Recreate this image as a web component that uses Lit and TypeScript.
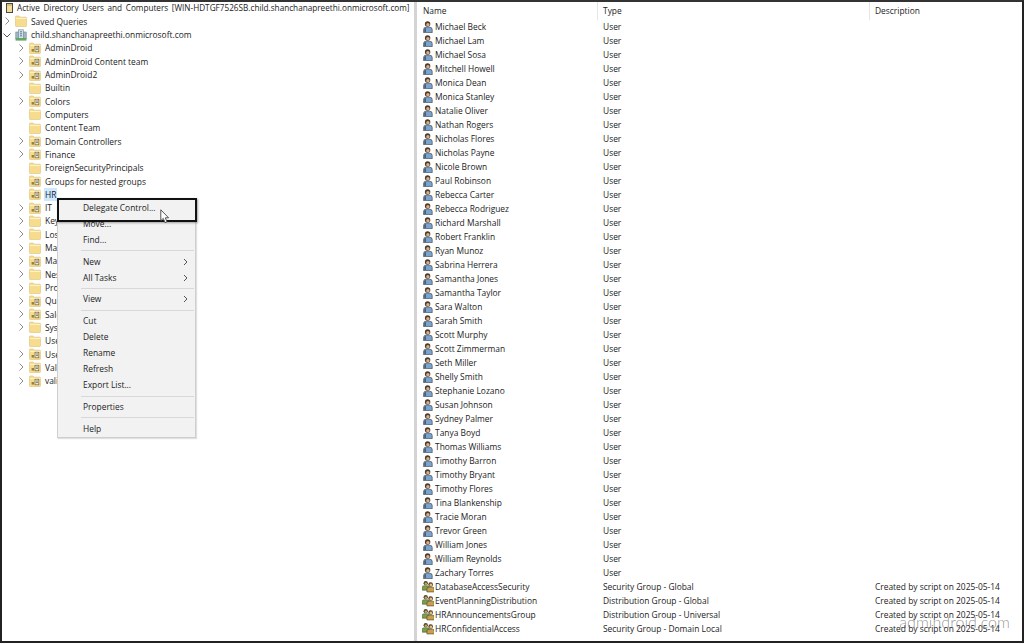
import {LitElement, html, css, svg} from 'lit';
import {customElement} from 'lit/decorators.js';

type TreeRow = {label: string; ou?: boolean; arrow?: boolean};
type ListRow = {name: string; type: string; description?: string; group?: boolean};

const TREE: TreeRow[] = [
  {label: 'AdminDroid', ou: true, arrow: true},
  {label: 'AdminDroid Content team', ou: true, arrow: true},
  {label: 'AdminDroid2', ou: true, arrow: true},
  {label: 'Builtin'},
  {label: 'Colors', ou: true, arrow: true},
  {label: 'Computers'},
  {label: 'Content Team'},
  {label: 'Domain Controllers', ou: true, arrow: true},
  {label: 'Finance', ou: true, arrow: true},
  {label: 'ForeignSecurityPrincipals'},
  {label: 'Groups for nested groups', ou: true},
  {label: 'HR', ou: true},
  {label: 'IT', ou: true, arrow: true},
  {label: 'Keys', arrow: true},
  {label: 'LostAndFound', arrow: true},
  {label: 'Managed Service Accounts', arrow: true},
  {label: 'Marketing', ou: true, arrow: true},
  {label: 'NestedGroups', arrow: true},
  {label: 'Program Data', arrow: true},
  {label: 'Quality', ou: true, arrow: true},
  {label: 'Sales', ou: true, arrow: true},
  {label: 'System', arrow: true},
  {label: 'Users'},
  {label: 'UserAccounts', ou: true, arrow: true},
  {label: 'Validation', ou: true, arrow: true},
  {label: 'validation2', ou: true, arrow: true},
];

const USERS = [
  'Michael Beck', 'Michael Lam', 'Michael Sosa', 'Mitchell Howell', 'Monica Dean', 'Monica Stanley',
  'Natalie Oliver', 'Nathan Rogers', 'Nicholas Flores', 'Nicholas Payne', 'Nicole Brown', 'Paul Robinson',
  'Rebecca Carter', 'Rebecca Rodriguez', 'Richard Marshall', 'Robert Franklin', 'Ryan Munoz', 'Sabrina Herrera',
  'Samantha Jones', 'Samantha Taylor', 'Sara Walton', 'Sarah Smith', 'Scott Murphy', 'Scott Zimmerman',
  'Seth Miller', 'Shelly Smith', 'Stephanie Lozano', 'Susan Johnson', 'Sydney Palmer', 'Tanya Boyd',
  'Thomas Williams', 'Timothy Barron', 'Timothy Bryant', 'Timothy Flores', 'Tina Blankenship', 'Tracie Moran',
  'Trevor Green', 'William Jones', 'William Reynolds', 'Zachary Torres',
];

const NOTE = 'Created by script on 2025-05-14';
const ROWS: ListRow[] = [
  ...USERS.map((name) => ({name, type: 'User'})),
  {name: 'DatabaseAccessSecurity', type: 'Security Group - Global', description: NOTE, group: true},
  {name: 'EventPlanningDistribution', type: 'Distribution Group - Global', description: NOTE, group: true},
  {name: 'HRAnnouncementsGroup', type: 'Distribution Group - Universal', description: NOTE, group: true},
  {name: 'HRConfidentialAccess', type: 'Security Group - Domain Local', description: NOTE, group: true},
];

// menu rows: null is a separator
const MENU: ({label: string; sub?: boolean} | null)[] = [
  {label: 'Delegate Control...'}, {label: 'Move...'}, {label: 'Find...'}, null,
  {label: 'New', sub: true}, {label: 'All Tasks', sub: true}, null,
  {label: 'View', sub: true}, null,
  {label: 'Cut'}, {label: 'Delete'}, {label: 'Rename'}, {label: 'Refresh'}, {label: 'Export List...'}, null,
  {label: 'Properties'}, null,
  {label: 'Help'},
];

const chevronRight = html`<svg class="chev" viewBox="0 0 8 10"><path d="M2.5 1.5 6 5 2.5 8.5" fill="none" stroke="#8c8c8c" stroke-width="1"/></svg>`;
const chevronDown = html`<svg class="chev" viewBox="0 0 8 10"><path d="M.5 3.5 4 7 7.5 3.5" fill="none" stroke="#555" stroke-width="1"/></svg>`;
const menuChevron = html`<svg class="sub" viewBox="0 0 5 8"><path d="M1 1 4 4 1 7" fill="none" stroke="#555" stroke-width="1"/></svg>`;

function folder(ou = false) {
  return html`<svg class="ico" viewBox="0 0 12 12">
    <path d="M.5 2.5V1.6q0-.6.6-.6h3l1 1.2h5.8q.6 0 .6.6v8q0 .7-.6.7H1.1q-.6 0-.6-.7z" fill="#f8dc8e" stroke="#e0c888" stroke-width=".7"/>
    <path d="M1 3.5h10.5" stroke="#fdf3c8" stroke-width="1"/>
    ${ou ? svg`<rect x="6" y="4.2" width="3.8" height="5.6" fill="#fbf6e4" stroke="#6f6238" stroke-width=".7"/><path d="M6.8 6h2.2M6.8 7.6h2.2" stroke="#5f5f5f" stroke-width=".8"/><rect x="2.6" y="7" width="2.4" height="2.6" fill="#9c8236"/>` : ''}
  </svg>`;
}

const titleIcon = html`<svg class="ico narrow" viewBox="0 0 7 10">
  <rect x=".5" y=".5" width="6" height="9" fill="#f3dc9a" stroke="#4a4a3c" stroke-width="1"/>
  <path d="M1 2h5" stroke="#b9a561" stroke-width="1"/>
</svg>`;

const userIcon = html`<svg class="ico" viewBox="0 0 12 12">
  <circle cx="5.6" cy="3" r="2.7" fill="#4c3a2c"/>
  <ellipse cx="5.9" cy="3.7" rx="1.7" ry="1.6" fill="#d9ad86"/>
  <path d="M1.6 11.7V8.6Q1.6 6.2 4 6.2h3.6q2.6 0 2.6 2.4v3.1z" fill="#7ba3cc" stroke="#3f4d5c" stroke-width=".7"/>
  <path d="M2.4 11V8.6Q2.4 7 3.8 7v4z" fill="#3f4d5c"/>
</svg>`;

const groupIcon = html`<svg class="ico" viewBox="0 0 13 13">
  <g transform="translate(-.6 -.2) scale(.86)"><circle cx="5.4" cy="3" r="2.7" fill="#4f4526"/><ellipse cx="5.6" cy="3.6" rx="1.6" ry="1.5" fill="#c8a765"/><path d="M1 11.8V8.4Q1 6.2 3.4 6.2h4q2.4 0 2.4 2.2v3.4z" fill="#7d9f4c" stroke="#3f5226" stroke-width=".7"/></g>
  <g transform="translate(4.4 1) scale(.92)"><circle cx="5.4" cy="3" r="2.7" fill="#4a3620"/><ellipse cx="5.6" cy="3.6" rx="1.7" ry="1.6" fill="#e3bb7c"/><path d="M1 11.8V8.4Q1 6.2 3.4 6.2h4q2.4 0 2.4 2.2v3.4z" fill="#c79f4e" stroke="#4e3f1e" stroke-width=".7"/></g>
</svg>`;

const domainIcon = html`<svg class="ico" viewBox="0 0 12 12">
  <rect x=".8" y="3" width="3.6" height="7" fill="#9fb6c4" stroke="#6c8797" stroke-width=".6"/>
  <rect x="7.6" y="3" width="3.6" height="7" fill="#9fb6c4" stroke="#6c8797" stroke-width=".6"/>
  <rect x="3.6" y=".8" width="4.8" height="9.2" fill="#d5e0e6" stroke="#6c8797" stroke-width=".6"/>
  <rect x=".6" y="9" width="10.8" height="2.6" fill="#63a868"/>
  <path d="M5 2.8h2M5 4.8h2M5 6.8h2" stroke="#43737f" stroke-width=".9"/>
</svg>`;

@customElement('app-root')
export class AppRoot extends LitElement {
  static styles = css`
    :host {
      display: block;
      width: 1024px;
      height: 643px;
      font-family: "Open Sans", "Noto Sans", sans-serif;
      font-size: 8.42px;
      color: #222;
      background: #fff;
    }
    .frame {
      position: relative;
      box-sizing: border-box;
      width: 1024px;
      height: 643px;
      border: 2px solid #222;
      border-top-color: #333;
      display: flex;
      overflow: hidden;
    }
    .ico { width: 12px; height: 12px; flex: none; }
    .ico.narrow { width: 7px; height: 10px; }
    .chev { width: 8px; height: 10px; flex: none; }

    /* left pane */
    .tree {
      width: 412px;
      flex: none;
      white-space: nowrap;
      overflow: hidden;
    }
    .row {
      height: 13.32px;
      display: flex;
      align-items: center;
    }
    .row .label { line-height: 13px; padding: 0 1px; }
    .title { padding-left: 4px; height: 11px; margin-bottom: 1.6px; gap: 3px; }
    .title .label { font-size: 8.2px; word-spacing: 1.5px; }
    .top { padding-left: 1px; gap: 3px; }
    .top .chev { margin-right: 1px; }
    .child { padding-left: 15px; }
    .child .chev { margin-right: 4px; }
    .spacer { width: 8px; flex: none; margin-right: 4px; }
    .child .label { margin-left: 3px; }
    .sel { background: #cde8ff; padding: 0 2px 0 1px; margin-left: 2px; }

    .divider {
      width: 3px;
      flex: none;
      background: #d4d4d4;
    }

    /* right pane */
    .list {
      flex: 1;
      min-width: 0;
      display: flex;
      flex-direction: column;
      white-space: nowrap;
    }
    .cols {
      display: grid;
      grid-template-columns: 181px 272px 1fr;
      height: 18px;
    }
    .cols div {
      padding-left: 5px;
      line-height: 18px;
      height: 18px;
      border-right: 1px solid #e5e5e5;
    }
    .cols div:first-child { padding-left: 6px; }
    .cols div:last-child { border-right: 0; }
    .item {
      display: grid;
      grid-template-columns: 181px 272px 1fr;
      height: 14px;
      line-height: 14px;
      align-items: center;
    }
    .item .name {
      display: flex;
      align-items: center;
      gap: 1px;
      padding-left: 5px;
    }
    .item .cell { padding-left: 5px; }

    /* context menu */
    .menu {
      position: absolute;
      left: 55px;
      top: 196px;
      width: 139px;
      height: 240px;
      box-sizing: border-box;
      background: #f2f2f2;
      border: 1px solid #cfcfcf;
      box-shadow: 1px 1px 1px rgba(0,0,0,.12);
      padding-top: 1.1px;
    }
    .mi {
      height: 16px;
      line-height: 16px;
      padding-left: 25px;
      padding-right: 7px;
      display: flex;
      justify-content: space-between;
      align-items: center;
    }
    .sub { width: 5px; height: 8px; flex: none; }
    .sep { height: 1px; background: #d8d8d8; margin: 2.35px 1px 2.35px 23px; }
    .hilite {
      position: absolute;
      left: 55px;
      top: 196px;
      width: 140px;
      height: 24px;
      box-sizing: border-box;
      border: 2px solid #111;
      box-shadow: 1px 1px 2px rgba(0,0,0,.35);
    }
    .cursor {
      position: absolute;
      left: 158px;
      top: 207px;
      width: 10px;
      height: 15px;
    }
    .mark {
      position: absolute;
      right: 12px;
      bottom: 11px;
      font-family: Lato, "Open Sans", sans-serif;
      font-size: 16px;
      font-weight: 300;
      letter-spacing: .05px;
      color: rgba(80,80,80,.62);
      line-height: 16px;
    }
  `;

  render() {
    return html`
      <div class="frame">
        <div class="tree">
          <div class="row title">${titleIcon}<span class="label">Active Directory Users and Computers [WIN-HDTGF7526SB.child.shanchanapreethi.onmicrosoft.com]</span></div>
          <div class="row top">${chevronRight}${folder()}<span class="label">Saved Queries</span></div>
          <div class="row top">${chevronDown}${domainIcon}<span class="label">child.shanchanapreethi.onmicrosoft.com</span></div>
          ${TREE.map((r) => html`
            <div class="row child">
              ${r.arrow ? chevronRight : html`<span class="spacer"></span>`}
              ${folder(r.ou)}
              <span class="label ${r.label === 'HR' ? 'sel' : ''}">${r.label}</span>
            </div>`)}
        </div>
        <div class="divider"></div>
        <div class="list">
          <div class="cols"><div>Name</div><div>Type</div><div>Description</div></div>
          <div>
            ${ROWS.map((r) => html`
              <div class="item">
                <div class="name">${r.group ? groupIcon : userIcon}<span>${r.name}</span></div>
                <div class="cell">${r.type}</div>
                <div class="cell">${r.description ?? ''}</div>
              </div>`)}
          </div>
        </div>
        <div class="menu">
          ${MENU.map((m) => m === null
            ? html`<div class="sep"></div>`
            : html`<div class="mi"><span>${m.label}</span>${m.sub ? menuChevron : ''}</div>`)}
        </div>
        <div class="hilite"></div>
        <svg class="cursor" viewBox="0 0 10 15"><path d="M.8.8V11.6L3.3 9.4 5 13.6 7 12.8 5.3 8.8H8.6z" fill="#fff" stroke="#444" stroke-width=".9"/></svg>
        <div class="mark">admindroid.com</div>
      </div>
    `;
  }
}
